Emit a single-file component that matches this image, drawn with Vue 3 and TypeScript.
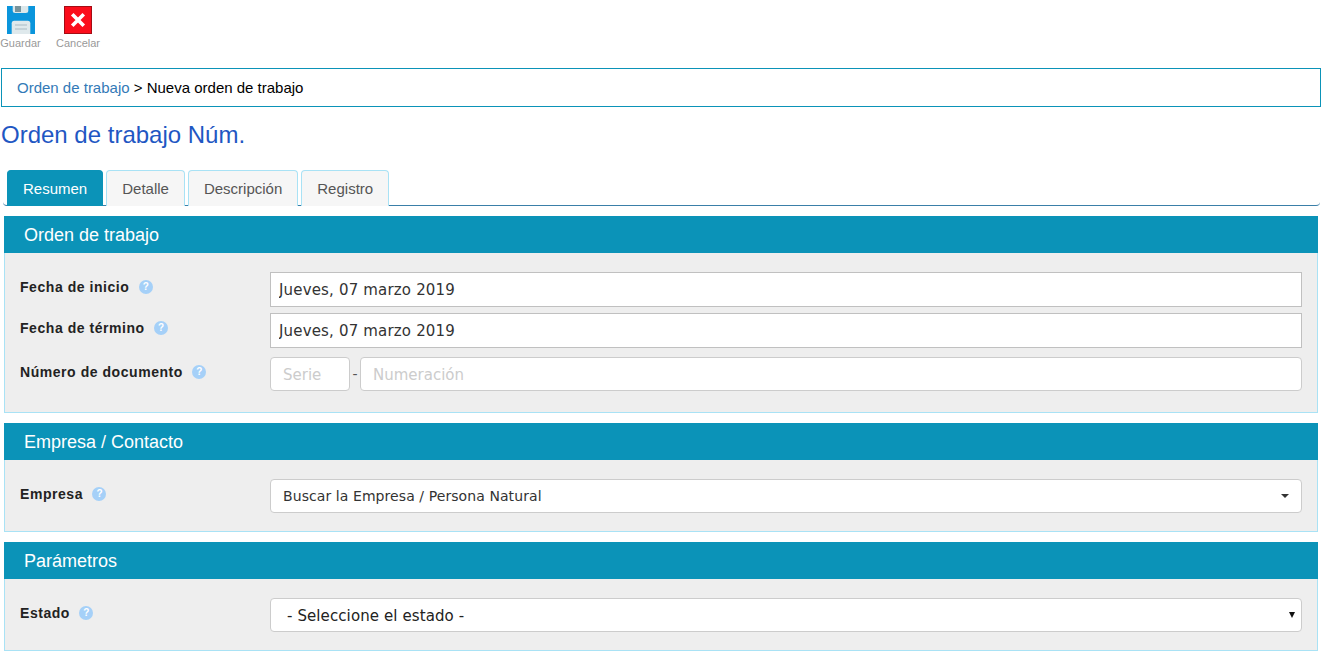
<script setup lang="ts">
const tabs: string[] = ['Resumen', 'Detalle', 'Descripción', 'Registro']
</script>

<template>
  <div class="page">
    <div class="toolbar">
      <div class="tool tool-save">
        <svg class="tool-icon" viewBox="0 0 28 28" width="28" height="28">
          <path d="M0 0H28V28H0Z" fill="#0a95dc" />
          <path d="M5.7 0H21.3V4.5Q21.3 7 18.8 7H8.2Q5.7 7 5.7 4.5Z" fill="#dbe7ea" />
          <rect x="8" y="0" width="6" height="6" fill="#78939b" />
          <path d="M4.7 28V17.2Q4.7 14.7 7.2 14.7H20.8Q23.3 14.7 23.3 17.2V28Z" fill="#dfe9ec" />
          <rect x="8" y="18.5" width="12" height="1" fill="#a9bcc3" />
          <rect x="8" y="22.5" width="12" height="1" fill="#a9bcc3" />
        </svg>
        <span>Guardar</span>
      </div>
      <div class="tool tool-cancel">
        <svg class="tool-icon" viewBox="0 0 28 28" width="28" height="28">
          <rect x="0.5" y="0.5" width="27" height="27" fill="#fb0d1b" stroke="#a50c14" />
          <path d="M9.5 9.5L18.5 18.5M18.5 9.5L9.5 18.5" stroke="#fff" stroke-width="3.6" stroke-linecap="square" />
        </svg>
        <span>Cancelar</span>
      </div>
    </div>

    <nav class="crumbs"><a class="crumb-link">Orden de trabajo</a> &gt; Nueva orden de trabajo</nav>

    <h1 class="title">Orden de trabajo Núm.</h1>

    <div class="tabs">
      <div v-for="(t, i) in tabs" :key="t" class="tab" :class="{ active: i === 0 }">{{ t }}</div>
    </div>

    <section class="panel">
      <h2 class="panel-head">Orden de trabajo</h2>
      <div class="panel-body body-first">
        <div class="row row-a">
          <label class="lbl">Fecha de inicio <i class="help">?</i></label>
          <input class="field square" value="Jueves, 07 marzo 2019" />
        </div>
        <div class="row row-b">
          <label class="lbl">Fecha de término <i class="help">?</i></label>
          <input class="field square" value="Jueves, 07 marzo 2019" />
        </div>
        <div class="row row-c">
          <label class="lbl">Número de documento <i class="help">?</i></label>
          <div class="doc">
            <input class="field serie" placeholder="Serie" />
            <span class="dash">-</span>
            <input class="field num" placeholder="Numeración" />
          </div>
        </div>
      </div>
    </section>

    <section class="panel">
      <h2 class="panel-head">Empresa / Contacto</h2>
      <div class="panel-body">
        <div class="row">
          <label class="lbl">Empresa <i class="help">?</i></label>
          <div class="combo">
            <span>Buscar la Empresa / Persona Natural</span>
            <b class="caret"></b>
          </div>
        </div>
      </div>
    </section>

    <section class="panel">
      <h2 class="panel-head">Parámetros</h2>
      <div class="panel-body">
        <div class="row">
          <label class="lbl">Estado <i class="help">?</i></label>
          <div class="sel-wrap">
            <select class="sel">
              <option>- Seleccione el estado -</option>
            </select>
            <b class="sel-arrow"></b>
          </div>
        </div>
      </div>
    </section>
  </div>
</template>

<style>
html, body { margin: 0; background: #fff; }
</style>

<style scoped>
.page {
  font-family: "Liberation Sans", Arial, sans-serif;
  color: #000;
  height: 657px;
  overflow: hidden;
  box-sizing: border-box;
}
.toolbar {
  display: flex;
  height: 68px;
  box-sizing: border-box;
  padding-top: 6px;
}
.tool {
  display: flex;
  flex-direction: column;
  align-items: center;
  font-size: 11px;
  line-height: 13px;
  color: #999;
}
.tool span { margin-top: 3px; }
.tool-icon { display: block; }
.tool-save { width: 41px; }
.tool-cancel { width: 44px; margin-left: 15px; }
.crumbs {
  margin: 0 2px 0 1px;
  height: 39px;
  box-sizing: border-box;
  border: 1px solid #0b93b8;
  padding-left: 15px;
  font-size: 15px;
  line-height: 38px;
}
.crumb-link { color: #337ab7; }
.title {
  margin: 15px 0 0 1px;
  height: 26px;
  font-size: 24px;
  line-height: 25px;
  font-weight: 400;
  color: #1f57c3;
}
.tabs {
  display: flex;
  gap: 3px;
  margin: 22px 3px 0 3px;
  padding-left: 4px;
  height: 36px;
  box-sizing: border-box;
  border-bottom: 1px solid #3a7fa8;
  border-bottom-left-radius: 4px;
  border-bottom-right-radius: 4px;
}
.tab {
  height: 36px;
  box-sizing: border-box;
  padding: 0 15px;
  border: 1px solid #a9e2f5;
  border-bottom: 0;
  border-radius: 4px 4px 0 0;
  background: #f6f6f6;
  color: #555;
  font-size: 15px;
  line-height: 35px;
}
.tab.active {
  background: #0b93b8;
  border-color: #0b93b8;
  color: #fff;
}
.panel {
  margin: 10px 5px 0 4px;
}
.panel-head {
  margin: 0;
  height: 37px;
  padding-left: 20px;
  background: #0b93b8;
  color: #fff;
  font-size: 18px;
  font-weight: 400;
  line-height: 38px;
}
.panel-body {
  background: #eee;
  border: 1px solid #a9e2f5;
  border-top: 0;
  padding: 19px 15px 18px 15px;
  height: 72px;
  box-sizing: border-box;
}
.body-first { height: 160px; }
.row {
  display: grid;
  grid-template-columns: 250px 1fr;
  align-items: start;
}
.row-b { margin-top: 6px; }
.row-c { margin-top: 9px; }
.lbl {
  font-size: 14px;
  font-weight: 700;
  letter-spacing: 0.55px;
  color: #222;
  line-height: 16px;
  padding-top: 7px;
}
.help {
  display: inline-block;
  width: 14px;
  height: 14px;
  margin-left: 5px;
  border-radius: 50%;
  background: #a5d0f8;
  color: #fff;
  font-style: normal;
  font-size: 10px;
  font-weight: 700;
  line-height: 14px;
  letter-spacing: 0;
  text-align: center;
  vertical-align: 2px;
}
.field {
  display: block;
  width: 100%;
  height: 34px;
  box-sizing: border-box;
  border: 1px solid #ccc;
  border-radius: 4px;
  background: #fff;
  padding: 1px 8px 0;
  font-family: "DejaVu Sans", Verdana, sans-serif;
  font-size: 15px;
  color: #333;
  outline: 0;
}
.field::placeholder { color: #ccc; opacity: 1; }
.square {
  height: 35px;
  border-radius: 0;
  border-color: #c0c0c0;
  letter-spacing: 0.17px;
  padding-top: 0;
}
.doc {
  display: flex;
  align-items: center;
}
.serie { width: 80px; flex: none; padding: 1px 12px 0; }
.dash {
  width: 10px;
  text-align: center;
  font-family: "DejaVu Sans", Verdana, sans-serif;
  font-size: 14px;
  color: #555;
}
.num { flex: 1; min-width: 0; width: auto; padding: 1px 12px 0; }
.combo {
  height: 34px;
  box-sizing: border-box;
  border: 1px solid #ccc;
  border-radius: 4px;
  background: #fff;
  padding: 0 12px;
  display: flex;
  align-items: center;
  justify-content: space-between;
  font-family: "DejaVu Sans", Verdana, sans-serif;
  font-size: 14px;
  letter-spacing: 0.08px;
  color: #333;
}
.caret {
  width: 0;
  height: 0;
  border-left: 4px solid transparent;
  border-right: 4px solid transparent;
  border-top: 4px solid #333;
}
.sel-wrap { position: relative; }
.sel {
  appearance: none;
  display: block;
  width: 100%;
  height: 34px;
  box-sizing: border-box;
  border: 1px solid #ccc;
  border-radius: 4px;
  background: #fff;
  padding: 2px 12px 0 16px;
  font-family: "DejaVu Sans", Verdana, sans-serif;
  font-size: 15px;
  letter-spacing: 0.1px;
  color: #222;
  outline: 0;
}
.sel-arrow {
  position: absolute;
  right: 7px;
  top: 14px;
  width: 0;
  height: 0;
  border-left: 3.5px solid transparent;
  border-right: 3.5px solid transparent;
  border-top: 6px solid #111;
}
</style>
